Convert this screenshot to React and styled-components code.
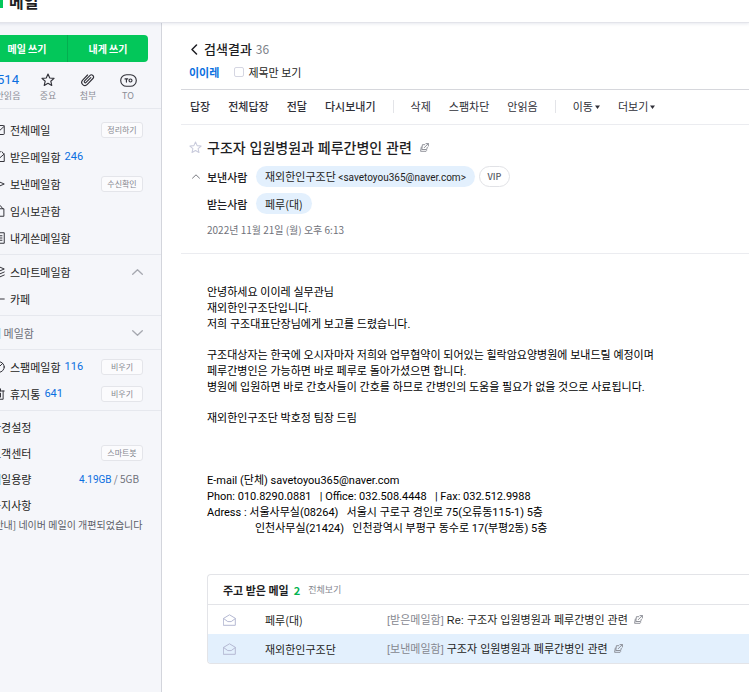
import React from 'react';
import styled, { createGlobalStyle } from 'styled-components';

const GlobalStyle = createGlobalStyle`
  * {
    box-sizing: border-box;
  }
  body {
    margin: 0;
    overflow: hidden;
    background: #ffffff;
    color: #1e1e23;
    font-family: "Noto Sans CJK KR", sans-serif;
    font-size: 11px;
    line-height: 16px;
  }
  button, input {
    font: inherit;
    color: inherit;
    margin: 0;
    padding: 0;
    border: 0;
    background: none;
  }
  button {
    cursor: pointer;
    white-space: nowrap;
  }
  a {
    color: inherit;
    text-decoration: none;
  }
  h1, h2, h3, p, ul {
    margin: 0;
    padding: 0;
    list-style: none;
  }
  svg {
    display: block;
    flex-shrink: 0;
  }
`;

/* the page is scrolled a little to the right and down */
const Page = styled.div`
  display: flex;
  flex-direction: column;
  min-height: calc(100vh + 20px);
  margin: -20px 0 0 -32px;
`;

const TopBar = styled.header`
  display: flex;
  align-items: center;
  gap: 6px;
  height: 43px;
  padding: 0 0 0 19px;
  background: #ffffff;
  border-bottom: 1px solid #e3e4ea;
  box-shadow: 0 1px 3px rgba(60, 70, 120, 0.12);
  z-index: 1;
`;

const Logo = styled.span`
  width: 16px;
  height: 16px;
  margin-bottom: 3px;
  background: #03c75a;
`;

const Service = styled.h1`
  font-size: 16px;
  line-height: 20px;
  font-weight: 700;
`;

const Columns = styled.div`
  display: flex;
  flex: 1;
`;

const Sidebar = styled.aside`
  width: 194px;
  flex-shrink: 0;
  background: #f5f6fa;
  border-right: 1px solid #d3d5dc;
`;

const WriteButtons = styled.div`
  display: flex;
  margin: 12px 13px 0 19px;
`;

const WriteButton = styled.button`
  flex: 1;
  height: 27px;
  color: #ffffff;
  font-size: 10px;
  font-weight: 700;
  background: #03c75a;
  border-radius: ${({ last }) => (last ? '0 4px 4px 0' : '4px 0 0 4px')};
  border-left: ${({ last }) => (last ? '1px solid #04ae50' : '0')};
`;

const QuickList = styled.ul`
  display: grid;
  grid-template-columns: repeat(4, 40px);
  padding: 8px 0 6px 20px;
`;

const QuickLink = styled.a`
  display: flex;
  flex-direction: column;
  align-items: center;
  color: #8b8d96;
  font-size: 9px;
  line-height: 12px;
`;

const QuickTop = styled.span`
  display: flex;
  align-items: center;
  height: 20px;
  color: ${({ blue }) => (blue ? '#0a6fe0' : '#303038')};
  font-family: Roboto, sans-serif;
  font-size: 13px;
`;

const Section = styled.section`
  border-top: 1px solid #e6e8ee;
  padding: ${({ first }) => (first ? '7px 18px 3px 19px' : '3px 18px 3px 19px')};
`;

const Row = styled.div`
  display: flex;
  align-items: center;
  gap: 4px;
  height: ${({ small }) => (small ? '26px' : '27px')};
  padding-left: ${({ indent }) => (indent ? '4px' : '0')};
  color: ${({ muted }) => (muted ? '#6d6f78' : 'inherit')};
  white-space: nowrap;
`;

const IconSlot = styled.span`
  width: 19px;
  padding-right: 1px;
  display: flex;
  justify-content: flex-end;
  color: #303038;
`;

const Count = styled.span`
  color: #0a6fe0;
  font-family: Roboto, sans-serif;
`;

const Tag = styled.button`
  width: 42px;
  height: 16px;
  margin-left: auto;
  border: 1px solid #e4e5ea;
  border-radius: 3px;
  background: #fbfbfd;
  color: #85878f;
  font-size: 8px;
  line-height: 12px;
`;

const Toggle = styled.button`
  margin-left: auto;
  color: #a6a8b0;
`;

const Usage = styled.span`
  margin-left: auto;
  padding-right: 4px;
  color: #70727a;
  font-size: 10px;
`;

const Notice = styled.a`
  display: block;
  padding-left: 4px;
  color: #5b5d66;
  font-size: 10px;
  line-height: 14px;
  white-space: nowrap;
`;

const Main = styled.main`
  flex: 1;
  min-width: 0;
  padding: 16px 0 0 19px;
  white-space: nowrap;
`;

const ResultHead = styled.div`
  display: flex;
  align-items: center;
  gap: 4px;
  height: 20px;
  padding-left: 8px;
  font-size: 12px;
`;

const ResultTitle = styled.h2`
  font-size: 13px;
  font-weight: 500;
`;

const ResultCount = styled.span`
  color: #7d7f88;
`;

const FilterRow = styled.div`
  display: flex;
  align-items: center;
  gap: 15px;
  height: 30px;
  padding: 0 0 4px 8px;
`;

const Keyword = styled.a`
  color: #0a6fe0;
  font-weight: 700;
`;

const CheckLabel = styled.label`
  display: flex;
  align-items: center;
  gap: 4px;
`;

const Check = styled.input`
  appearance: none;
  width: 10px;
  height: 10px;
  border: 1px solid #d5d6e2;
  border-radius: 2px;
  background: #ffffff;
`;

const Toolbar = styled.div`
  display: flex;
  align-items: center;
  gap: 18px;
  height: 36px;
  padding: 0 0 2px 9px;
  border-top: 1px solid #d6d7dc;
  border-bottom: 1px solid #ebecf0;
`;

const Tool = styled.button`
  display: flex;
  align-items: center;
  gap: 2px;
  color: #303038;
  font-weight: ${({ strong }) => (strong ? 500 : 400)};
  svg {
    margin-top: 2px;
  }
`;

const Split = styled.span`
  width: 1px;
  height: 13px;
  margin: 0 -1px;
  background: #e3e4e8;
`;

const MailHead = styled.div`
  padding: 7px 0 15px 8px;
  border-bottom: 1px solid #ebecf0;
`;

const Line = styled.div`
  display: flex;
  align-items: center;
  height: ${({ tall }) => (tall ? '31px' : '27px')};
`;

const Lead = styled.button`
  width: 18px;
  color: ${({ pale }) => (pale ? '#c9cbdc' : '#70727a')};
  svg {
    margin-left: ${({ pale }) => (pale ? '0' : '3px')};
  }
`;

const Subject = styled.h2`
  font-family: "Liberation Sans", "Noto Sans CJK KR", sans-serif;
  font-size: 14px;
  line-height: 20px;
  font-weight: 500;
  margin-right: 8px;
`;

const Field = styled.span`
  width: 49px;
  font-weight: 500;
`;

const Chip = styled.button`
  height: 21px;
  margin-right: 4px;
  padding: 0 9px;
  border-radius: 11px;
  background: #e3f0fd;
`;

const Address = styled.span`
  font-family: Roboto, sans-serif;
  font-size: 10px;
`;

const Vip = styled.button`
  height: 21px;
  width: 31px;
  border: 1px solid #e1e2e6;
  border-radius: 11px;
  color: #5b5d66;
  font-size: 9px;
  font-weight: 500;
`;

const SentAt = styled.p`
  padding: 5px 0 0 18px;
  color: #70727a;
  font-size: 10px;
`;

const Body = styled.article`
  display: flex;
  flex-direction: column;
  gap: 15px;
  padding: 31px 0 0 26px;
  color: #000000;
  font-family: Roboto, "Noto Sans CJK KR", sans-serif;
  white-space: pre;
`;

const Signature = styled.div`
  margin-top: 31px;
`;

const SecondOffice = styled.p`
  padding-left: 48px;
`;

const Thread = styled.section`
  margin: 37px 0 0 26px;
  border: 1px solid #e3e4e8;
  border-right: 0;
  border-radius: 4px 0 0 4px;
  overflow: hidden;
`;

const ThreadHead = styled.div`
  display: flex;
  align-items: center;
  gap: 5px;
  height: 30px;
  padding-left: 15px;
  border-bottom: 1px solid #e3e4e8;
`;

const ThreadTitle = styled.h3`
  font-size: 11px;
  font-weight: 700;
`;

const ThreadCount = styled.strong`
  color: #03b351;
`;

const SeeAll = styled.a`
  padding-left: 3px;
  color: #85878f;
  font-size: 9px;
`;

const ThreadRow = styled.div`
  display: grid;
  grid-template-columns: 42px 122px 1fr;
  align-items: center;
  height: 29px;
  padding-left: 15px;
  background: ${({ current }) => (current ? '#e3f0fd' : '#ffffff')};
`;

const ThreadSubject = styled.a`
  display: flex;
  align-items: center;
  gap: 3px;
  font-family: "Liberation Sans", "Noto Sans CJK KR", sans-serif;
  svg {
    margin-left: 3px;
  }
`;

const Folder = styled.span`
  color: #85878f;
`;

const Svg = ({ size = 13, width, box = '0 0 16 16', children }) => (
  <svg
    width={width || size}
    height={size}
    viewBox={box}
    fill="none"
    stroke="currentColor"
    strokeWidth="1.3"
    strokeLinejoin="round"
    strokeLinecap="round"
    aria-hidden="true"
  >
    {children}
  </svg>
);

const StarIcon = ({ size }) => (
  <Svg size={size}>
    <path d="M8 1.2 10 5.7l4.9.5-3.7 3.2 1.1 4.8L8 11.7l-4.3 2.5 1.1-4.8L1.1 6.2 6 5.7Z" />
  </Svg>
);

const ClipIcon = () => (
  <Svg size={14}>
    <path d="m11.2 5.2-5.4 5.6a1.2 1.2 0 0 1-1.7-1.7l6-6.2a2.4 2.4 0 0 1 3.5 3.4l-6.4 6.8a3.6 3.6 0 0 1-5.3-5L7.5 2.3" />
  </Svg>
);

const ToIcon = () => (
  <Svg size={13} width={17} box="0 0 17 13">
    <g strokeWidth="1.1">
      <rect x="0.7" y="0.7" width="15.6" height="11.6" rx="5.8" />
      <path d="M5 4.9h2.8M6.4 4.9v3.2" />
      <circle cx="10.5" cy="6.5" r="1.5" />
    </g>
  </Svg>
);

const AllIcon = () => (
  <Svg size={12}>
    <rect x="1" y="2" width="14" height="12" rx="1" />
    <path d="m4 7 3.5 3L15 3" />
  </Svg>
);

const InboxIcon = () => (
  <Svg size={12}>
    <path d="M10 1H4L1 5v9h14V5l-3-4M4 7l4 3 7-6" />
  </Svg>
);

const SentIcon = () => (
  <Svg size={12}>
    <path d="m1 2 14 6-14 6 2-6Z" />
  </Svg>
);

const DraftIcon = () => (
  <Svg size={12}>
    <path d="M2 5h12.5v10H2ZM5 5V1h5l3 4" />
  </Svg>
);

const NoteIcon = () => (
  <Svg size={12}>
    <path d="M2 1h13v14H2ZM6 5h6M6 8h6M6 11h6" />
  </Svg>
);

const StackIcon = () => (
  <Svg size={12}>
    <path d="m1 4 7-3 7 3-7 3ZM1 8l7 3 7-3M1 12l7 3 7-3" />
  </Svg>
);

const BranchIcon = () => (
  <Svg size={12}>
    <path d="M6 0v8h9" />
  </Svg>
);

const SpamIcon = () => (
  <Svg size={12}>
    <circle cx="8" cy="8" r="7" />
    <path d="m3 13 10-10" />
  </Svg>
);

const TrashIcon = () => (
  <Svg size={12}>
    <path d="M1 4h14M3 4v11h10.5V4M6 4V1h4v3M6.5 7v5M10 7v5" />
  </Svg>
);

const Chevron = ({ up, size = 6, width = 11 }) => (
  <Svg size={size} width={width} box="0 0 11 6">
    <path d={up ? 'm.7 5.3 4.8-4.6 4.8 4.6' : 'm.7.7 4.8 4.6L10.3.7'} />
  </Svg>
);

const BackIcon = () => (
  <Svg size={11} width={11} box="0 0 11 11">
    <path d="M7.5 1 3 5.5 7.5 10" strokeWidth="1.5" />
  </Svg>
);

const DownIcon = () => (
  <svg width="5" height="4" viewBox="0 0 5 4" fill="currentColor" aria-hidden="true">
    <path d="M0 .5h5L2.5 4Z" />
  </svg>
);

const PopupIcon = () => (
  <Svg size={9} box="0 0 9 9">
    <g stroke="#85878f" strokeWidth="0.9">
      <path d="M4.7 1.7H2.4L1.8 6.5h4.900L7.300 4.300M1.300 4 .600 8.300h5.500l.5-.7M4.200 4.700 8.200.7M6 .6h2.400V3" />
    </g>
  </Svg>
);

const OpenMailIcon = () => (
  <Svg size={12} width={13} box="0 0 13 12">
    <g stroke="#b4b8d2" strokeWidth="1">
      <path d="M.7 4.3 6.5.8l5.8 3.5v7H.7ZM.7 4.6l4.1 3h3.4l4.1-3" />
    </g>
  </Svg>
);

const folders = [
  { name: '전체메일', icon: <AllIcon />, tag: '정리하기' },
  { name: '받은메일함', icon: <InboxIcon />, count: 246 },
  { name: '보낸메일함', icon: <SentIcon />, tag: '수신확인' },
  { name: '임시보관함', icon: <DraftIcon /> },
  { name: '내게쓴메일함', icon: <NoteIcon /> },
];

const bins = [
  { name: '스팸메일함', icon: <SpamIcon />, count: 116, tag: '비우기' },
  { name: '휴지통', icon: <TrashIcon />, count: 641, tag: '비우기' },
];

const thread = [
  { who: '페루(대)', folder: '[받은메일함]', title: 'Re: 구조자 입원병원과 페루간병인 관련' },
  { who: '재외한인구조단', folder: '[보낸메일함]', title: '구조자 입원병원과 페루간병인 관련', current: true },
];

const FolderRow = ({ name, icon, count, tag }) => (
  <Row>
    <IconSlot>{icon}</IconSlot>
    <a href="#">{name}</a>
    {count && <Count>{count}</Count>}
    {tag && <Tag>{tag}</Tag>}
  </Row>
);

const SideMenu = () => (
  <Sidebar>
    <WriteButtons>
      <WriteButton>메일 쓰기</WriteButton>
      <WriteButton last="true">내게 쓰기</WriteButton>
    </WriteButtons>
    <QuickList>
      <li><QuickLink href="#"><QuickTop blue="true">514</QuickTop>안읽음</QuickLink></li>
      <li><QuickLink href="#"><QuickTop><StarIcon size={14} /></QuickTop>중요</QuickLink></li>
      <li><QuickLink href="#"><QuickTop><ClipIcon /></QuickTop>첨부</QuickLink></li>
      <li><QuickLink href="#"><QuickTop><ToIcon /></QuickTop>TO</QuickLink></li>
    </QuickList>
    <Section first="true">
      {folders.map((folder) => <FolderRow key={folder.name} {...folder} />)}
    </Section>
    <Section>
      <Row>
        <IconSlot><StackIcon /></IconSlot>
        <a href="#">스마트메일함</a>
        <Toggle aria-label="스마트메일함 접기"><Chevron up /></Toggle>
      </Row>
      <Row>
        <IconSlot><BranchIcon /></IconSlot>
        <a href="#">카페</a>
      </Row>
    </Section>
    <Section>
      <Row indent="true" muted="true">
        <a href="#">내 메일함</a>
        <Toggle aria-label="내 메일함 펼치기"><Chevron /></Toggle>
      </Row>
    </Section>
    <Section>
      {bins.map((bin) => <FolderRow key={bin.name} {...bin} />)}
    </Section>
    <Section>
      <Row small="true" indent="true"><a href="#">환경설정</a></Row>
      <Row small="true" indent="true"><a href="#">고객센터</a><Tag>스마트봇</Tag></Row>
      <Row small="true" indent="true"><a href="#">메일용량</a><Usage><Count>4.19GB</Count> / 5GB</Usage></Row>
      <Row small="true" indent="true"><a href="#">공지사항</a></Row>
      <Notice href="#">[안내] 네이버 메일이 개편되었습니다</Notice>
    </Section>
  </Sidebar>
);

const App = () => {
  return (
    <>
      <GlobalStyle />
      <Page>
        <TopBar>
          <Logo />
          <Service>메일</Service>
        </TopBar>
        <Columns>
          <SideMenu />
          <Main>
            <ResultHead>
              <button aria-label="뒤로"><BackIcon /></button>
              <ResultTitle>검색결과</ResultTitle>
              <ResultCount>36</ResultCount>
            </ResultHead>
            <FilterRow>
              <Keyword href="#">이이레</Keyword>
              <CheckLabel><Check type="checkbox" />제목만 보기</CheckLabel>
            </FilterRow>
            <Toolbar>
              <Tool strong="true">답장</Tool>
              <Tool strong="true">전체답장</Tool>
              <Tool strong="true">전달</Tool>
              <Tool strong="true">다시보내기</Tool>
              <Split />
              <Tool>삭제</Tool>
              <Tool>스팸차단</Tool>
              <Tool>안읽음</Tool>
              <Split />
              <Tool>이동<DownIcon /></Tool>
              <Tool>더보기<DownIcon /></Tool>
            </Toolbar>
            <MailHead>
              <Line tall="true">
                <Lead pale="true" aria-label="중요 표시"><StarIcon size={13} /></Lead>
                <Subject>구조자 입원병원과 페루간병인 관련</Subject>
                <PopupIcon />
              </Line>
              <Line>
                <Lead aria-label="상세 접기"><Chevron up size={5} width={8} /></Lead>
                <Field>보낸사람</Field>
                <Chip>재외한인구조단 <Address>&lt;savetoyou365@naver.com&gt;</Address></Chip>
                <Vip>VIP</Vip>
              </Line>
              <Line>
                <Lead as="span" />
                <Field>받는사람</Field>
                <Chip>페루(대)</Chip>
              </Line>
              <SentAt>2022년 11월 21일 (월) 오후 6:13</SentAt>
            </MailHead>
            <Body>
              <div>
                <p>안녕하세요 이이레 실무관님</p>
                <p>재외한인구조단입니다.</p>
                <p>저희 구조대표단장님에게 보고를 드렸습니다.</p>
              </div>
              <div>
                <p>구조대상자는 한국에 오시자마자 저희와 업무협약이 되어있는 힐락암요양병원에 보내드릴 예정이며</p>
                <p>페루간병인은 가능하면 바로 페루로 돌아가셨으면 합니다.</p>
                <p>병원에 입원하면 바로 간호사들이 간호를 하므로 간병인의 도움을 필요가 없을 것으로 사료됩니다.</p>
              </div>
              <p>재외한인구조단 박호정 팀장 드림</p>
              <Signature>
                <p>E-mail (단체) savetoyou365@naver.com</p>
                <p>Phon: 010.8290.0881   | Office: 032.508.4448   | Fax: 032.512.9988</p>
                <p>Adress : 서울사무실(08264)   서울시 구로구 경인로 75(오류동115-1) 5층</p>
                <SecondOffice>인천사무실(21424)   인천광역시 부평구 동수로 17(부평2동) 5층</SecondOffice>
              </Signature>
            </Body>
            <Thread>
              <ThreadHead>
                <ThreadTitle>주고 받은 메일</ThreadTitle>
                <ThreadCount>2</ThreadCount>
                <SeeAll href="#">전체보기</SeeAll>
              </ThreadHead>
              {thread.map((mail) => (
                <ThreadRow key={mail.who} current={mail.current ? 'true' : undefined}>
                  <OpenMailIcon />
                  <span>{mail.who}</span>
                  <ThreadSubject href="#">
                    <Folder>{mail.folder}</Folder>
                    {mail.title}
                    <PopupIcon />
                  </ThreadSubject>
                </ThreadRow>
              ))}
            </Thread>
          </Main>
        </Columns>
      </Page>
    </>
  );
};

export default App;
